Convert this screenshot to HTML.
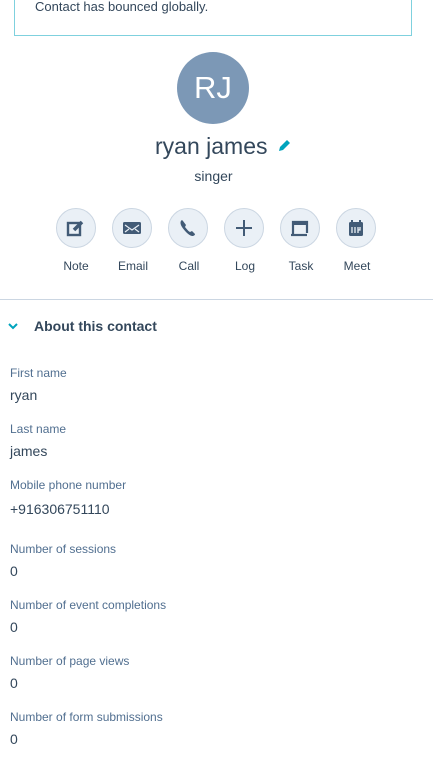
<!DOCTYPE html>
<html><head><style>
body{margin:0;width:433px;height:759px;overflow:hidden;background:#fff;font-family:"Liberation Sans",sans-serif;color:#33475b;position:relative}
.a{position:absolute}
.box{left:14px;top:-10px;width:396px;height:44px;border:1px solid #7fd1de;}
.c{width:38px;height:38px;border-radius:50%;background:#eaf0f6;border:1px solid #cbd6e2;top:208px}
.c svg{position:absolute;left:9px;top:9px}
.lbl{top:259px;font-size:12px;width:56px;text-align:center}
.fl{left:10px;font-size:12px;color:#516f90}
.fv{left:10px;font-size:14px;color:#33475b}
</style></head><body>
<div class="a box"></div>
<div class="a" style="left:35px;top:-1px;font-size:13px;">Contact has bounced globally.</div>
<div class="a" style="left:177px;top:52px;width:72px;height:72px;border-radius:50%;background:#7c98b6;color:#fff;font-size:31px;text-align:center;line-height:72px">RJ</div>
<div class="a" style="left:155px;top:133px;font-size:23px;">ryan james</div>
<svg class="a" style="left:277px;top:139px" width="14" height="14"><path d="M2 12l1-4 7-7 3 3-7 7z" fill="#00a4bd"/></svg>
<div class="a" style="left:0;width:427px;text-align:center;top:168px;font-size:14px;">singer</div>

<div class="a c" style="left:56px"><svg width="20" height="20"><rect x="2" y="5" width="12" height="12" fill="none" stroke="#425b76" stroke-width="2.4"/><path d="M8 12 L16 4" stroke="#425b76" stroke-width="3.5"/></svg></div>
<div class="a c" style="left:112px"><svg width="20" height="20"><rect x="1" y="4" width="18" height="12" rx="1.5" fill="#425b76"/><path d="M3 7l7 5 7-5M3 14l4-3M17 14l-4-3" stroke="#eaf0f6" fill="none" stroke-width="1.2"/></svg></div>
<div class="a c" style="left:168px"><svg width="20" height="20"><path d="M4 2c-2 1-2 4 0 7s6 8 10 9c2 0 3-1 3-2l-3-3-2 1c-2-1-4-4-5-5l1-2-3-4z" fill="#425b76"/></svg></div>
<div class="a c" style="left:224px"><svg width="20" height="20"><path d="M10 2v16M2 10h16" stroke="#425b76" stroke-width="2"/></svg></div>
<div class="a c" style="left:280px"><svg width="20" height="20"><path d="M3 17V4h14v11" fill="none" stroke="#425b76" stroke-width="2.2"/><rect x="3" y="3" width="14" height="4" fill="#425b76"/><path d="M1 17h16" stroke="#425b76" stroke-width="2.2"/></svg></div>
<div class="a c" style="left:336px"><svg width="20" height="20"><rect x="3" y="4" width="14" height="14" rx="1.5" fill="#425b76"/><path d="M6 2v4M14 2v4" stroke="#425b76" stroke-width="2"/><path d="M6 9v6M9 9v6M12 9v6M14 9v3h-2" stroke="#eaf0f6" stroke-width="1.3" fill="none"/></svg></div>
<div class="a lbl" style="left:48px">Note</div>
<div class="a lbl" style="left:105px">Email</div>
<div class="a lbl" style="left:161px">Call</div>
<div class="a lbl" style="left:217px">Log</div>
<div class="a lbl" style="left:273px">Task</div>
<div class="a lbl" style="left:329px">Meet</div>
<div class="a" style="left:0;top:299px;width:433px;height:1px;background:#cbd6e2"></div>
<svg class="a" style="left:8px;top:322px" width="10" height="8"><path d="M1 2l4 4 4-4" stroke="#00a4bd" stroke-width="2" fill="none"/></svg>
<div class="a" style="left:34px;top:318px;font-size:14px;font-weight:bold">About this contact</div>
<div class="a fl" style="top:366px">First name</div><div class="a fv" style="top:387px">ryan</div>
<div class="a fl" style="top:422px">Last name</div><div class="a fv" style="top:443px">james</div>
<div class="a fl" style="top:478px">Mobile phone number</div><div class="a fv" style="top:501px">+916306751110</div>
<div class="a fl" style="top:542px">Number of sessions</div><div class="a fv" style="top:563px">0</div>
<div class="a fl" style="top:598px">Number of event completions</div><div class="a fv" style="top:619px">0</div>
<div class="a fl" style="top:654px">Number of page views</div><div class="a fv" style="top:675px">0</div>
<div class="a fl" style="top:710px">Number of form submissions</div><div class="a fv" style="top:731px">0</div>
</body></html>
